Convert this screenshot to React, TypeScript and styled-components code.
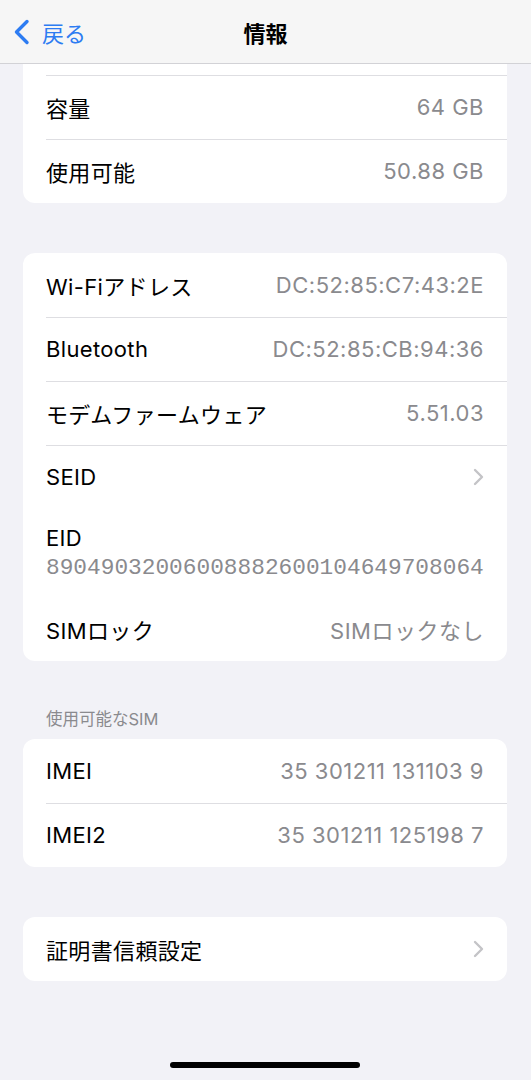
import React from "react";
import styled, { createGlobalStyle } from "styled-components";

const Global = createGlobalStyle`
  html, body { margin: 0; padding: 0; background: #f2f2f7; }
  body {
    font-family: "Inter", "Noto Sans CJK JP", sans-serif;
    -webkit-font-smoothing: antialiased;
  }
`;

const Page = styled.div`
  width: 531px;
  min-height: 1080px;
  background: #f2f2f7;
  position: relative;
  overflow: hidden;
`;

const NavBar = styled.header`
  position: fixed;
  top: 0;
  left: 0;
  width: 531px;
  height: 63px;
  background: #f6f6f6;
  border-bottom: 1px solid #d2d2d6;
  z-index: 10;
  display: grid;
  grid-template-columns: 1fr auto 1fr;
  align-items: center;
`;

const BackButton = styled.div`
  display: flex;
  align-items: center;
  gap: 12px;
  padding-left: 13px;
  color: #2d7cf2;
  font-size: 22px;
  font-family: "Noto Sans CJK JP", sans-serif;
`;

const Title = styled.div`
  font-size: 22px;
  font-weight: 700;
  color: #000;
  font-family: "Noto Sans CJK JP", sans-serif;
`;

const Content = styled.main`
  display: flex;
  flex-direction: column;
  padding: 11px 24px 0 23px;
`;

const Card = styled.section<{ $gap?: number }>`
  background: #fff;
  border-radius: 12px;
  margin-top: ${(p) => p.$gap ?? 0}px;
  overflow: hidden;
`;

const Row = styled.div<{ $tall?: boolean }>`
  position: relative;
  height: ${(p) => (p.$tall ? 88 : 64)}px;
  padding: 0 23px;
  display: flex;
  flex-direction: ${(p) => (p.$tall ? "column" : "row")};
  justify-content: ${(p) => (p.$tall ? "center" : "space-between")};
  align-items: ${(p) => (p.$tall ? "flex-start" : "center")};
  & + &::before {
    content: "";
    position: absolute;
    top: 0;
    left: 23px;
    right: 0;
    height: 1px;
    background: #dedee2;
  }
`;

const Label = styled.span`
  font-size: 22px;
  color: #000;
  letter-spacing: 0.35px;
`;

const Value = styled.span`
  font-size: 22px;
  color: #8a8a8e;
  letter-spacing: 0.5px;
`;

const Mono = styled.span`
  font-family: "Liberation Mono", "DejaVu Sans Mono", monospace;
  font-size: 22.8px;
  color: #8a8a8e;
  margin-top: 4px;
`;

const SectionHeader = styled.div`
  margin-top: 48px;
  padding-left: 23px;
  height: 20px;
  line-height: 20px;
  font-size: 16.5px;
  color: #8a8a8e;
  margin-bottom: 10px;
`;

const HomeIndicator = styled.div`
  position: absolute;
  bottom: 12px;
  left: 170px;
  width: 190px;
  height: 6px;
  border-radius: 3px;
  background: #000;
`;

const BackChevron = () => (
  <svg width="17" height="26" viewBox="0 0 17 26" fill="none">
    <path d="M14 2.5 L3.5 13 L14 23.5" stroke="#2d7cf2" strokeWidth="3.4" strokeLinecap="round" strokeLinejoin="round" />
  </svg>
);

const Chevron = () => (
  <svg width="11" height="18" viewBox="0 0 11 18" fill="none">
    <path d="M2 2 L9 9 L2 16" stroke="#c4c4c7" strokeWidth="2.4" strokeLinecap="round" strokeLinejoin="round" />
  </svg>
);

type Item = { label: string; value?: React.ReactNode; chevron?: boolean };

const RowItem = ({ label, value, chevron }: Item) => (
  <Row>
    <Label>{label}</Label>
    {chevron ? <Chevron /> : <Value>{value}</Value>}
  </Row>
);

export default function App() {
  return (
    <Page>
      <Global />
      <NavBar>
        <BackButton>
          <BackChevron />
          <span>戻る</span>
        </BackButton>
        <Title>情報</Title>
        <div />
      </NavBar>
      <Content>
        <Card>
          <Row />
          <RowItem label="容量" value="64 GB" />
          <RowItem label="使用可能" value="50.88 GB" />
        </Card>
        <Card $gap={50}>
          <RowItem label="Wi-Fiアドレス" value="DC:52:85:C7:43:2E" />
          <RowItem label="Bluetooth" value="DC:52:85:CB:94:36" />
          <RowItem label="モデムファームウェア" value="5.51.03" />
          <RowItem label="SEID" chevron />
          <Row $tall>
            <Label>EID</Label>
            <Mono>89049032006008882600104649708064</Mono>
          </Row>
          <RowItem label="SIMロック" value="SIMロックなし" />
        </Card>
        <SectionHeader>使用可能なSIM</SectionHeader>
        <Card>
          <RowItem label="IMEI" value="35 301211 131103 9" />
          <RowItem label="IMEI2" value="35 301211 125198 7" />
        </Card>
        <Card $gap={50}>
          <RowItem label="証明書信頼設定" chevron />
        </Card>
      </Content>
      <HomeIndicator />
    </Page>
  );
}
